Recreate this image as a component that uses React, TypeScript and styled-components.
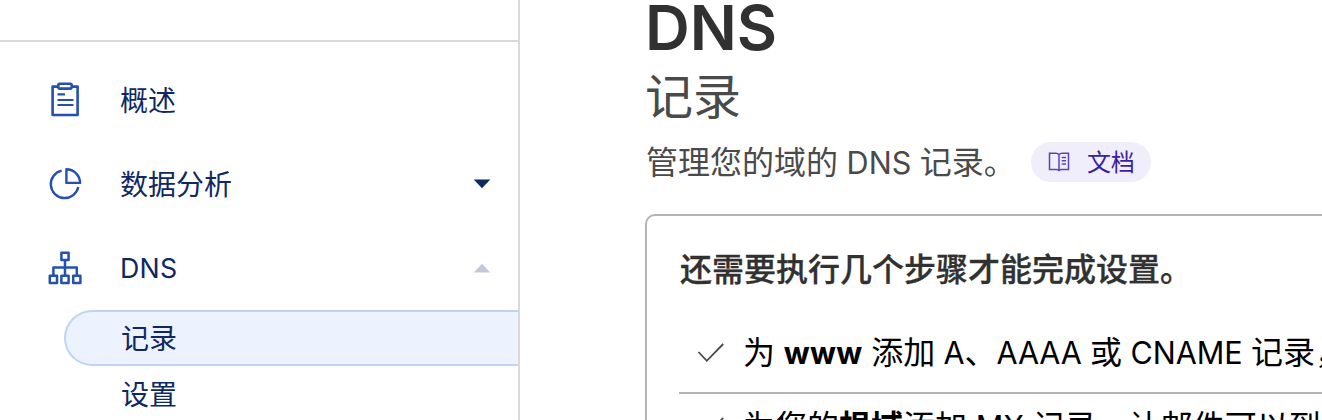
import React from 'react';
import styled, { createGlobalStyle } from 'styled-components';

const GlobalStyle = createGlobalStyle`
  * { box-sizing: border-box; }
  body {
    margin: 0;
    overflow: hidden;
    background: #fff;
    font-family: Inter, "Noto Sans CJK SC", sans-serif;
  }
`;

const Page = styled.div`
  display: flex;
  width: 100%;
  height: 420px;
  overflow: hidden;
`;

const Sidebar = styled.nav`
  flex: none;
  width: 520px;
  height: 420px;
  border-right: 2px solid #d9d9d9;
  overflow: hidden;
`;

const SidebarTop = styled.div`
  height: 42px;
  border-bottom: 2px solid #d9d9d9;
`;

const NavList = styled.div`
  padding-top: 16px;
`;

const NavItem = styled.div`
  display: flex;
  align-items: center;
  height: 84px;
  padding: 0 27px 0 48px;
  color: #0f2862;
  font-size: 28px;
  line-height: 40px;

  svg { flex: none; }
`;

const NavLabel = styled.span<{ $latin?: boolean }>`
  flex: 1;
  margin-left: 38px;
  padding-top: ${(p) => (p.$latin ? 0 : 2)}px;
`;

const Latin = styled.span<{ $tracking?: number }>`
  font-size: 0.955em;
  letter-spacing: ${(p) => p.$tracking ?? 0}px;
`;

const SubItem = styled.div<{ $active?: boolean }>`
  display: flex;
  align-items: center;
  height: 56px;
  margin-left: 64px;
  padding: 2px 0 0 55px;
  border: 2px solid ${(p) => (p.$active ? '#bdd4f5' : 'transparent')};
  border-right: 0;
  border-radius: 28px 0 0 28px;
  background: ${(p) => (p.$active ? '#ecf3fe' : 'transparent')};
  color: #0f2862;
  font-size: 28px;
  line-height: 40px;
`;

const Main = styled.main`
  flex: 1;
  min-width: 0;
  padding-left: 125px;
  color: #4a4a4a;
`;

const Title = styled.h1`
  margin: 0;
  height: 65px;
  color: #313131;
  font-size: 62px;
  font-weight: 600;
  line-height: 55px;
`;

const Subtitle = styled.h2`
  margin: 0;
  font-size: 48px;
  font-weight: 400;
  line-height: 64px;
`;

const Intro = styled.div`
  display: flex;
  align-items: center;
  height: 66px;
  font-size: 32px;
  line-height: 48px;
  white-space: nowrap;
`;

const IntroText = styled.span`
  padding: 2px 0 0 1px;
`;

const DocLink = styled.a`
  display: flex;
  align-items: center;
  gap: 17px;
  width: 120px;
  height: 40px;
  margin: 0 0 0 15px;
  padding-left: 17px;
  border-radius: 20px;
  background: #f1eefb;
  color: #3a1fa0;
  font-size: 24px;
  line-height: 36px;

  span { padding-top: 2px; }
`;

const Card = styled.section`
  width: 900px;
  height: 400px;
  margin-top: 19px;
  padding: 30px 32px;
  border: 2px solid #b3b3b3;
  border-radius: 10px;
`;

const CardTitle = styled.h3`
  margin: 0;
  height: 74px;
  padding-left: 1px;
  color: #313131;
  font-size: 32px;
  font-weight: 500;
  line-height: 48px;
  -webkit-text-stroke: 0.3px #313131;
`;

const Step = styled.div`
  display: flex;
  align-items: center;
  height: 74px;
  padding: 0 0 6px 18px;
  border-bottom: 2px solid #b3b3b3;
  color: #000;
  font-size: 32px;
  line-height: 48px;
  white-space: nowrap;

  svg { flex: none; margin-right: 19px; }
`;

const ClipboardIcon = () => (
  <svg width="34" height="36" viewBox="0 0 34 36" fill="none" stroke="#2450b0" strokeWidth="2.6" strokeLinejoin="round">
    <path d="M10 4.6H4.6V33H29.6V4.6H23.5" />
    <rect x="10.3" y="1.8" width="13.4" height="4.8" rx="1.5" />
    <path d="M9.5 12.4H17M9.5 18H25.5M9.5 23H25.5" strokeWidth="2.2" />
  </svg>
);

const PieIcon = () => (
  <svg width="34" height="34" viewBox="0 0 34 34" fill="none" stroke="#2450b0" strokeWidth="2.4" strokeLinejoin="round">
    <path d="M13.6 3.6A13.9 13.9 0 1 0 30.3 20.1" />
    <path d="M18.4 2.3V15.9H32.1A13.7 13.7 0 0 0 18.4 2.3Z" />
  </svg>
);

const NetworkIcon = () => (
  <svg width="34" height="34" viewBox="0 0 34 34" fill="none" stroke="#2450b0" strokeWidth="2.5" strokeLinejoin="round">
    <rect x="13.4" y="1.8" width="7.2" height="7.2" />
    <path d="M17 9V24.5M5.4 24.5V16.5H28.8V24.5" />
    <rect x="1.8" y="24.8" width="7.2" height="7.2" />
    <rect x="13.4" y="24.8" width="7.2" height="7.2" />
    <rect x="25.2" y="24.8" width="7.2" height="7.2" />
  </svg>
);

const Caret = ({ up = false }: { up?: boolean }) => (
  <svg width="18" height="10" viewBox="0 0 18 10">
    <path d={up ? 'M.7 9.5L9 .7L17.3 9.5Z' : 'M.7 .5L9 9.3L17.3 .5Z'} fill={up ? '#c3c9d8' : '#0f2862'} />
  </svg>
);

const BookIcon = () => (
  <svg width="22" height="22" viewBox="0 0 22 22" fill="none" stroke="#5d43b8" strokeWidth="1.5">
    <path d="M11 3.7C10 2.5 9 2.3 8 2.3H1.5V18.5H8.5C9.7 18.5 10.5 18.8 11 19.4C11.5 18.8 12.3 18.5 13.5 18.5H20.5V2.3H14C13 2.3 12 2.5 11 3.7V19.4M13.7 6.5H18M13.7 9.7H18M13.7 12.9H18" />
  </svg>
);

const CheckIcon = () => (
  <svg width="27" height="22" viewBox="0 0 27 22" fill="none" stroke="#4a4a4a" strokeWidth="1.8">
    <path d="M1.5 10L9.8 18.8L26.2 2" />
  </svg>
);

export default function App() {
  return (
    <Page>
      <GlobalStyle />
      <Sidebar>
        <SidebarTop />
        <NavList>
          <NavItem><ClipboardIcon /><NavLabel>概述</NavLabel></NavItem>
          <NavItem><PieIcon /><NavLabel>数据分析</NavLabel><Caret /></NavItem>
          <NavItem><NetworkIcon /><NavLabel $latin><Latin $tracking={0.3}>DNS</Latin></NavLabel><Caret up /></NavItem>
          <SubItem $active>记录</SubItem>
          <SubItem>设置</SubItem>
        </NavList>
      </Sidebar>
      <Main>
        <Title>DNS</Title>
        <Subtitle>记录</Subtitle>
        <Intro>
          <IntroText>管理您的域的<Latin> DNS </Latin>记录。</IntroText>
          <DocLink><BookIcon /><span>文档</span></DocLink>
        </Intro>
        <Card>
          <CardTitle>还需要执行几个步骤才能完成设置。</CardTitle>
          <Step>
            <CheckIcon />
            <span>为<Latin $tracking={0.2}> <b>www</b> </Latin>添加<Latin $tracking={-0.15}> A</Latin>、<Latin $tracking={-0.15}>AAAA </Latin>或<Latin $tracking={-0.1}> CNAME </Latin>记录，</span>
          </Step>
          <Step>
            <CheckIcon />
            <span>为您的<b>根域</b>添加<Latin> MX </Latin>记录，让邮件可以到达</span>
          </Step>
        </Card>
      </Main>
    </Page>
  );
}
